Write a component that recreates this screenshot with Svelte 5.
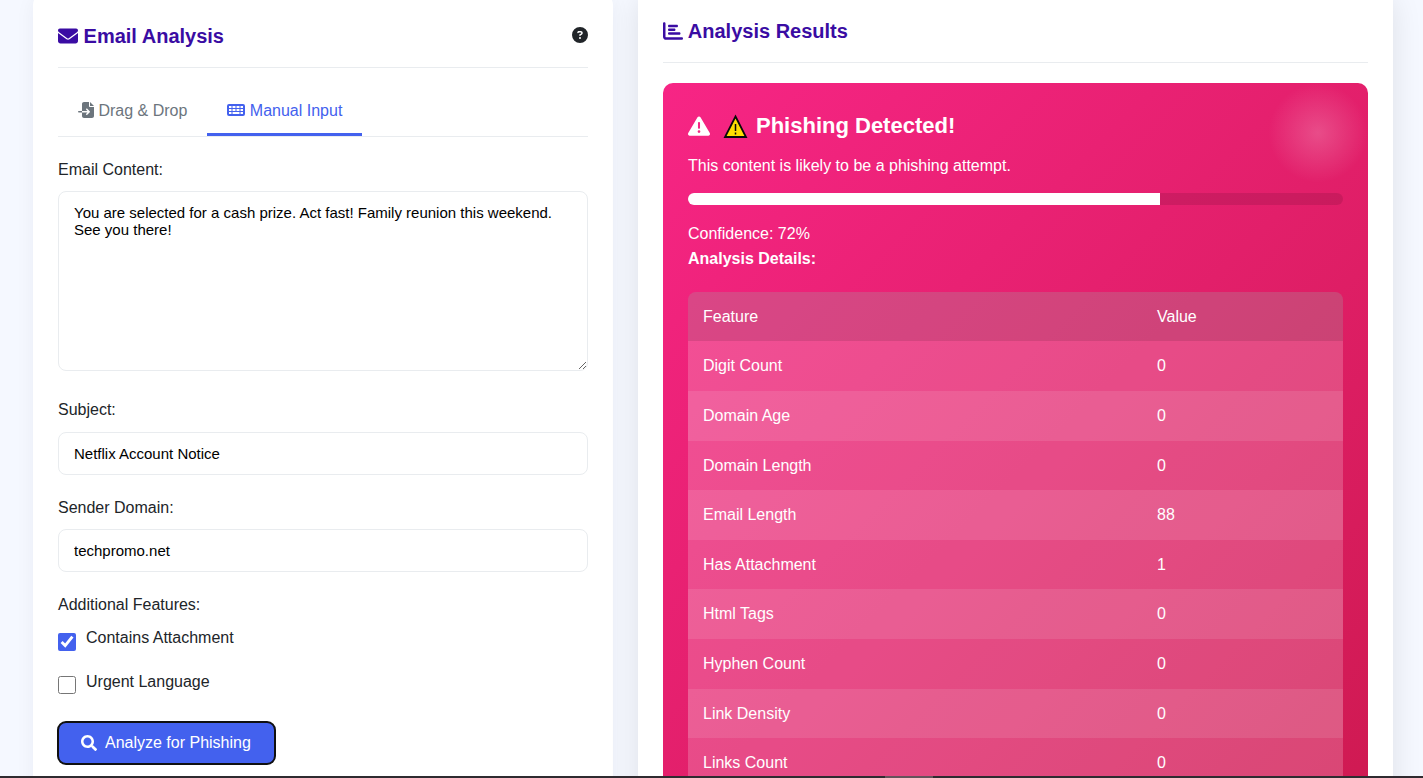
<script>
  const paths = {
    envelope: 'M48 64C21.5 64 0 85.5 0 112c0 15.1 7.1 29.3 19.2 38.4L236.8 313.6c11.4 8.5 27 8.5 38.4 0L492.8 150.4c12.1-9.1 19.2-23.3 19.2-38.4c0-26.5-21.5-48-48-48H48zM0 176V384c0 35.3 28.7 64 64 64H448c35.3 0 64-28.7 64-64V176L294.4 339.2c-22.8 17.1-54 17.1-76.8 0L0 176z',
    question: 'M256 512A256 256 0 1 0 256 0a256 256 0 1 0 0 512zM169.8 165.3c7.9-22.3 29.1-37.3 52.8-37.3h58.3c34.9 0 63.1 28.3 63.1 63.1c0 22.6-12.1 43.5-31.7 54.8L280 264.4c-.2 13-10.9 23.6-24 23.6c-13.3 0-24-10.7-24-24V250.5c0-8.6 4.6-16.5 12.1-20.8l44.3-25.4c4.7-2.7 7.6-7.7 7.6-13.1c0-8.4-6.8-15.1-15.1-15.1H222.6c-3.4 0-6.4 2.1-7.5 5.3l-.4 1.2c-4.4 12.5-18.2 19-30.6 14.6s-19-18.2-14.6-30.6l.4-1.2zM224 352a32 32 0 1 1 64 0 32 32 0 1 1-64 0z',
    fileImport: 'M128 64c0-35.3 28.7-64 64-64H352V128c0 17.7 14.3 32 32 32H512V448c0 35.3-28.7 64-64 64H192c-35.3 0-64-28.7-64-64V336H302.1l-39 39c-9.4 9.4-9.4 24.6 0 33.9s24.6 9.4 33.9 0l80-80c9.4-9.4 9.4-24.6 0-33.9l-80-80c-9.4-9.4-24.6-9.4-33.9 0s-9.4 24.6 0 33.9l39 39H128V64zm0 224v48H24c-13.3 0-24-10.7-24-24s10.7-24 24-24H128zM512 128H384V0L512 128z',
    keyboard: 'M64 64H512a64 64 0 0 1 64 64V384a64 64 0 0 1-64 64H64a64 64 0 0 1-64-64V128a64 64 0 0 1 64-64zM64 128V192H144V128zM176 128V192H272V128zM304 128V192H400V128zM432 128V192H512V128zM64 224V288H144V224zM176 224V288H272V224zM304 224V288H400V224zM432 224V288H512V224zM64 320V384H144V320zM176 320V384H400V320zM432 320V384H512V320z',
    chart: 'M32 32c17.7 0 32 14.3 32 32V400c0 8.8 7.2 16 16 16H480c17.7 0 32 14.3 32 32s-14.3 32-32 32H80c-44.2 0-80-35.8-80-80V64C0 46.3 14.3 32 32 32zm96 96c0-17.7 14.3-32 32-32l192 0c17.7 0 32 14.3 32 32s-14.3 32-32 32l-192 0c-17.7 0-32-14.3-32-32zm32 64H288c17.7 0 32 14.3 32 32s-14.3 32-32 32H160c-17.7 0-32-14.3-32-32s14.3-32 32-32zm0 96H416c17.7 0 32 14.3 32 32s-14.3 32-32 32H160c-17.7 0-32-14.3-32-32s14.3-32 32-32z',
    warning: 'M256 32c14.2 0 27.3 7.5 34.5 19.8l216 368c7.3 12.4 7.3 27.7 .2 40.1S486.3 480 472 480H40c-14.3 0-27.6-7.7-34.7-20.1s-7-27.8 .2-40.1l216-368C228.7 39.5 241.8 32 256 32zm0 128c-13.3 0-24 10.7-24 24V296c0 13.3 10.7 24 24 24s24-10.7 24-24V184c0-13.3-10.7-24-24-24zm32 224a32 32 0 1 0 -64 0 32 32 0 1 0 64 0z',
    search: 'M505 442.7L405.3 343c-4.5-4.5-10.6-7-17-7H372c27.6-35.3 44-79.7 44-128C416 93.1 322.9 0 208 0S0 93.1 0 208s93.1 208 208 208c48.3 0 92.7-16.4 128-44v16.3c0 6.4 2.5 12.5 7 17l99.7 99.7c9.4 9.4 24.6 9.4 33.9 0l28.3-28.3c9.4-9.4 9.4-24.6.1-34zM208 336c-70.7 0-128-57.2-128-128 0-70.7 57.2-128 128-128 70.7 0 128 57.2 128 128 0 70.7-57.2 128-128 128z'
  };

  let content = $state('You are selected for a cash prize. Act fast! Family reunion this weekend. See you there!');
  let subject = $state('Netflix Account Notice');
  let domain = $state('techpromo.net');
  let attachment = $state(true);
  let urgent = $state(false);
  const confidence = 72;

  const features = [
    ['Digit Count', 0],
    ['Domain Age', 0],
    ['Domain Length', 0],
    ['Email Length', 88],
    ['Has Attachment', 1],
    ['Html Tags', 0],
    ['Hyphen Count', 0],
    ['Link Density', 0],
    ['Links Count', 0]
  ];
</script>

{#snippet icon(name, width = 512)}
  <svg class="icon" class:wide={width > 512} viewBox="0 0 {width} 512" aria-hidden="true">
    <path d={paths[name]} fill="currentColor" fill-rule="evenodd" />
  </svg>
{/snippet}

<div class="page">
  <main class="columns">
    <section class="card">
      <header class="card-header">
        <h2>{@render icon('envelope')} Email Analysis</h2>
        <span class="help">{@render icon('question')}</span>
      </header>

      <div class="tabs">
        <button class="tab" type="button">{@render icon('fileImport')} Drag &amp; Drop</button>
        <button class="tab active" type="button">{@render icon('keyboard', 576)} Manual Input</button>
      </div>

      <form onsubmit={(e) => e.preventDefault()}>
        <div class="group">
          <label for="content">Email Content:</label>
          <textarea id="content" bind:value={content} spellcheck="false"></textarea>
        </div>
        <div class="group">
          <label for="subject">Subject:</label>
          <input id="subject" class="text" type="text" bind:value={subject} />
        </div>
        <div class="group">
          <label for="domain">Sender Domain:</label>
          <input id="domain" class="text" type="text" bind:value={domain} />
        </div>
        <fieldset>
          <legend>Additional Features:</legend>
          <div class="check">
            <input id="attachment" type="checkbox" bind:checked={attachment} />
            <label for="attachment">Contains Attachment</label>
          </div>
          <div class="check">
            <input id="urgent" type="checkbox" bind:checked={urgent} />
            <label for="urgent">Urgent Language</label>
          </div>
        </fieldset>
        <button class="submit" type="submit">{@render icon('search')} Analyze for Phishing</button>
      </form>
    </section>

    <section class="card raised">
      <header class="card-header">
        <h2>{@render icon('chart')} Analysis Results</h2>
      </header>

      <div class="result">
        <h3>
          {@render icon('warning')}
          <svg class="sign" viewBox="0 0 28 28" aria-hidden="true">
            <path d="M16.5 4.5L27 25H6Z" fill="#ffde00" stroke="#0a0a0a" stroke-width="1.8" />
            <path d="M16.5 12v7M16.5 20.5v2" stroke="#0a0a0a" stroke-width="1.5" />
          </svg>
          Phishing Detected!
        </h3>
        <p>This content is likely to be a phishing attempt.</p>
        <div class="meter"><div class="fill" style="width: {confidence}%"></div></div>
        <p>Confidence: {confidence}%</p>
        <p><strong>Analysis Details:</strong></p>
        <table>
          <thead>
            <tr><th class="name">Feature</th><th>Value</th></tr>
          </thead>
          <tbody>
            {#each features as [name, value]}
              <tr><td>{name}</td><td>{value}</td></tr>
            {/each}
          </tbody>
        </table>
      </div>
    </section>
  </main>
  <div class="edge"><div class="thumb"></div></div>
</div>

<style>
  :global(body) {
    margin: 0;
    background: #f5f8ff;
  }
  .page,
  .page * {
    box-sizing: border-box;
  }
  .page {
    height: 100vh;
    overflow: hidden;
    font: 16px/1.6 'Liberation Sans', Arial, sans-serif;
    color: #212529;
  }
  .columns {
    display: grid;
    grid-template-columns: 580fr 755fr;
    gap: 25px;
    margin-top: -7px;
    padding: 0 30px 0 33px;
  }
  .card {
    background: #fff;
    border-radius: 12px;
    padding: 25px;
    box-shadow: 0 4px 20px rgba(0, 0, 60, 0.05);
  }
  .raised {
    margin-top: -5px;
    box-shadow: 0 10px 30px rgba(0, 0, 0, 0.1);
  }
  .card-header {
    display: flex;
    align-items: center;
    justify-content: space-between;
    padding-bottom: 13px;
    margin-bottom: 20px;
    border-bottom: 1px solid #e9ecef;
  }
  h2,
  h3,
  p {
    margin: 0;
  }
  h2 {
    font-size: 20px;
    line-height: 36px;
    color: #3a0ca3;
  }
  .icon {
    width: 1em;
    height: 1em;
    vertical-align: -0.125em;
  }
  .icon.wide {
    width: 18px;
  }
  .tabs {
    display: flex;
    margin-bottom: 20px;
    border-bottom: 1px solid #e9ecef;
  }
  .tab {
    font: inherit;
    color: #6c757d;
    background: none;
    border: 0;
    border-bottom: 3px solid transparent;
    padding: 10px 20px 9px;
  }
  .tab.active {
    color: #4361ee;
    border-bottom-color: #4361ee;
  }
  .group {
    margin-bottom: 20px;
  }
  label {
    display: block;
    margin-bottom: 9px;
  }
  fieldset {
    margin: 0 0 10px;
    padding: 0;
    border: 0;
  }
  legend {
    padding: 0;
    margin-bottom: 7px;
  }
  textarea,
  .text {
    display: block;
    width: 100%;
    padding: 12px 15px;
    border: 1px solid #e9ecef;
    border-radius: 8px;
    background: #fff;
    font-family: inherit;
    font-size: 15px;
    color: #000;
  }
  .text {
    height: 43px;
  }
  textarea {
    height: 180px;
    margin-bottom: 26px;
    resize: vertical;
  }
  .check {
    display: flex;
    align-items: center;
    gap: 10px;
    margin-bottom: 10px;
  }
  .check label {
    margin-bottom: 8px;
  }
  .check input {
    width: 18px;
    height: 18px;
    margin: 0;
    accent-color: #4361ee;
  }
  .submit {
    display: inline-flex;
    align-items: center;
    gap: 8px;
    padding: 12px 24px 12px 23px;
    border: 0;
    border-radius: 8px;
    background: #4361ee;
    color: #fff;
    font: 16px/18px 'Liberation Sans', Arial, sans-serif;
    outline: 2px solid #101010;
    outline-offset: -1px;
  }
  .result {
    position: relative;
    padding: 25px 25px 220px;
    border-radius: 10px;
    background: linear-gradient(135deg, #f72585, #c9184a);
    color: #fff;
  }
  .result::before {
    content: '';
    position: absolute;
    top: 0;
    right: 0;
    width: 100px;
    height: 100px;
    background: radial-gradient(circle, rgba(255, 255, 255, 0.2), transparent 70%);
  }
  h3 {
    display: flex;
    align-items: center;
    gap: 9px;
    margin-bottom: 9px;
    font-size: 22px;
    line-height: 36px;
  }
  .sign {
    width: 28px;
    height: 28px;
    overflow: visible;
  }
  .meter {
    height: 12px;
    margin: 14px 0 16px;
    border-radius: 6px;
    background: rgba(0, 0, 0, 0.1);
    overflow: hidden;
  }
  .fill {
    height: 100%;
    background: #fff;
  }
  table {
    width: 100%;
    margin-top: 20px;
    border-collapse: separate;
    border-spacing: 0;
    border-radius: 8px;
    overflow: hidden;
    background: rgba(255, 255, 255, 0.2);
  }
  th,
  td {
    padding: 12px 15px;
    text-align: left;
    font-weight: normal;
  }
  .name {
    width: 454px;
  }
  thead {
    background: rgba(0, 0, 0, 0.1);
  }
  tbody tr:nth-child(even) {
    background: rgba(255, 255, 255, 0.1);
  }
  .edge {
    position: fixed;
    inset: auto 0 0;
    height: 2px;
    background: #2f2b30;
  }
  .thumb {
    width: 48px;
    height: 2px;
    margin-left: 885px;
    background: #65535b;
  }
</style>
